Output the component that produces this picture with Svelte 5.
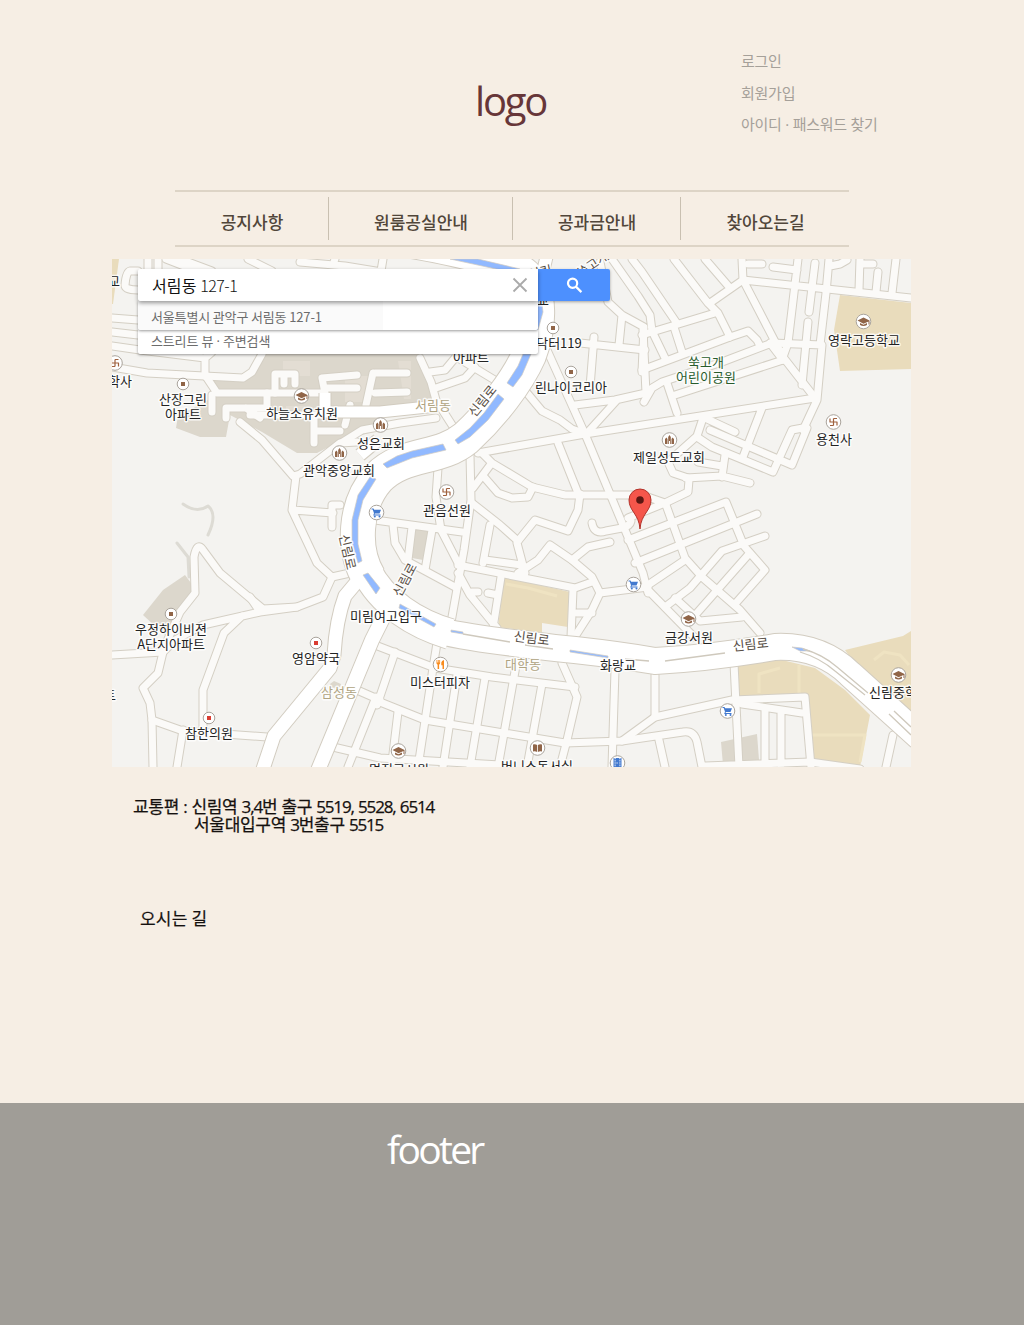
<script>
  const menu = ['공지사항', '원룸공실안내', '공과금안내', '찾아오는길'];
  const account = ['로그인', '회원가입', '아이디 · 패스워드 찾기'];

  // Minor streets
  const streets = [
    'M148 259V271M158 259V271M138 271H130Q126 272 125 285Q125 290 138 290',
    'M166 259L197 271M180 259L212 271M248 259L272 271M335 259L331 271M300 262L345 266L400 275M383 259L381 271',
    'M112 318L138 320M112 332L138 335M112 346L140 350L205 358L212 352M205 358V376',
    'M112 367L147 373L243 378L252 372L262 354',
    'M207 378L217 393H325M325 393L322 378L357 375M325 388H357',
    'M275 393V374H295V384M284 375V384M267 393V408H226V418M212 395V412M246 408L260 418',
    'M375 373H407M375 393L407 392M373 373L366 405M240 422L262 440L293 476L300 474L340 443L357 442',
    'M314 443V431H340M314 431V415M250 415H325M350 405L345 425M338 445L362 430L400 423L436 418',
    'M420 358L431 382L436 400L452 425M430 372L445 370L455 358M436 388L465 378L475 367M458 358L498 382',
    'M612 259L638 296L650 315L652 331L665 358M600 262L608 302L622 315L644 327L642 372M622 315L619 345',
    'M580 343L645 350M594 337L590 387M547 350L585 434L643 573L648 593',
    'M527 393L542 411L560 420L572 429L586 434M588 432L617 400M575 405L615 400L646 393L643 330',
    'M632 259L642 272L676 322M642 335L715 313M674 259L708 303L718 313L730 337M705 259L730 288M710 303L743 280L742 259',
    'M743 280L783 357L815 398M743 280L911 298M748 264H762M773 267L797 270M798 259L788 343L783 357M815 263L809 312M808 322L802 385',
    'M829 259L826 293L820 345M830 266L840 264L847 260M860 259L859 290M860 264H873M878 272L876 292M896 259L892 293',
    'M772 343L822 345L817 400L803 430M642 370L730 337L748 331L757 340L760 346M644 402L652 388L662 382L722 362L772 343M770 343L783 360',
    'M674 327L682 352M675 395L783 360M667 383L677 413M478 453L585 434L815 398M762 408L743 457M703 418L697 436L668 462L673 473L688 478',
    'M705 418L735 432M697 437L712 447L773 472L792 430L803 428M710 430L792 465L807 428M686 478L722 476L750 483M725 455L722 477M698 462L722 466',
    'M689 480L688 492L665 503L628 518M665 503L642 495L565 495L532 487L492 463L482 453',
    'M666 505L685 558L702 577L740 610L760 633M628 540L726 502L744 546L765 570L735 604M635 563L757 514M765 536L722 551L690 588L665 607',
    'M645 587L685 560M645 587L694 637M748 555L697 613M675 598L700 621L742 617M592 523Q594 535 606 531L622 528Q630 526 631 521',
    'M491 464L473 488M485 478L498 493L512 498L528 497L533 487M470 455L471 500L464 550L450 628M438 468L436 497L441 530L458 563',
    'M375 520L462 532M393 525L395 543L405 560L455 587M412 527L408 560M432 530L425 570M472 503L500 525L518 541M490 525L483 563',
    'M518 541L535 520L568 531L578 510L580 494M517 543L525 573M485 560L522 565M458 565L575 588L592 582M518 573L538 560L550 545L572 560L592 577L600 593L592 610L574 638',
    'M572 560L588 547L610 542M600 593L648 587M458 573L470 595L497 628M472 592H478M488 593L498 595M501 577L493 628M573 590L571 637M577 613H592',
    'M558 443L578 493M296 476L292 510L317 563L332 577L350 573M293 510L333 513M340 505H332V527',
    'M332 577L323 597L297 607L263 609L220 573L203 550Q197 541 194 557L195 593L180 612L164 648L158 673L143 688L150 703L152 720L153 767',
    'M112 655L163 652L175 640L203 625L260 612L297 607M250 597L260 612M242 616L224 633L203 690V735M152 720L183 731L267 737M183 730L177 767',
    'M357 690L380 700M376 697L348 767M333 747L380 758L500 765M375 645L435 668L492 677L575 687M375 700L425 720L565 743L622 741L655 717L732 700L805 697L811 767',
    'M395 652L377 705M437 643L433 668L418 767M457 675L443 767M485 678L470 767M517 660L498 767M542 684L527 767M562 663L577 697L567 740L560 767M615 670L612 767M398 712L392 762',
    'M655 675V717M734 663L739 767M642 738L683 732Q694 730 697 742L702 767M622 741L642 738M659 740L665 767M742 704L802 713M765 710V765M781 712V765M705 766L810 762L860 769M893 735L886 767'
  ];
  const avenues = [
    { d: 'M360 232C470 250 508 260 525 276C541 292 540 326 529 355C517 382 492 414 466 438C438 461 405 451 378 478C354 505 352 550 369 578', w: 34 },
    { d: 'M366 570C382 603 416 624 450 634', w: 30 },
    { d: 'M430 628C456 637 520 644 575 650Q620 655 655 661Q710 658 775 647Q820 645 850 674L920 737', w: 26 },
    { d: 'M366 571L345 596Q336 620 334 655L330 668L274 736L262 772', w: 13 },
    { d: 'M388 608L372 640L314 780', w: 14 },
    { d: 'M325 393V412H380L437 406', w: 11 },
    { d: 'M378 440L360 455', w: 12 },
    { d: 'M547 255L541 280', w: 12 }
  ];
  const water = [
    'M450 259H478L520 269L540 288L543 312L538 330L533 330L537 310L533 292L510 272Z',
    'M523 354H531L522 375L513 387L507 383L518 366Z',
    'M498 394L504 399L488 420L470 437L458 444L455 440L470 428L484 413Z',
    'M383 464L397 456L412 451L443 444L446 450L412 458L387 468Z',
    'M370 477L376 479L363 500L358 520L358 544L362 561L358 563L352 543L352 520L358 495Z',
    'M363 575L368 573L380 588L376 594Z',
    'M400 604L436 624L434 627L399 608Z',
    'M451 630L463 632V634L451 632ZM570 650L608 656V658L570 652ZM792 647L802 648L810 651L800 651Z'
  ];
  const land = {
    campus: 'M252 372L262 354H418L428 378L434 403L433 408L375 414L380 430L340 441L317 453H297L262 432L230 415L226 437H200L176 428L178 416L205 402L217 393L208 378L243 378Z',
    grey: ['M163 590L185 575L191 583L192 597L168 638L143 615Z', 'M415 528L428 531L423 560L412 558Z', 'M721 742L757 734L759 760L723 765Z', 'M330 684L334 681L341 684L340 687L331 688Z'],
    tan: ['M112 259H119L113 304H112Z', 'M840 295L911 303V369L840 371L834 330Z', 'M504 577L570 592L568 627L542 623V633L498 627Z', 'M738 665L782 660L815 668L845 690L870 715L860 767H812L805 697L738 700Z', 'M845 650L903 636L911 631V722L880 700Z']
  };

  const pins = [
    ['dot', 183, 384], ['dot', 553, 328], ['dot', 571, 372], ['dot', 171, 614], ['clinic', 316, 643], ['clinic', 209, 718],
    ['school', 301.5, 396], ['school', 863.5, 321.5], ['school', 688.5, 619], ['school', 898.5, 675], ['school', 398.5, 751],
    ['church', 380.5, 425], ['church', 339.5, 453], ['church', 669.5, 440], ['temple', 115, 363], ['temple', 446.5, 492], ['temple', 833.5, 422],
    ['cart', 376.5, 512.5], ['cart', 633.5, 584.5], ['cart', 727.5, 711], ['food', 440.5, 664.5], ['book', 537.5, 748], ['film', 617.5, 763]
  ];
  // text, centre x, baseline y, style, rotation
  const labels = [
    ['교', 114, 286], ['학사', 120, 386], ['산장그린', 183, 404], ['아파트', 183, 419], ['하늘소유치원', 302, 418],
    ['아파트', 471, 362], ['교', 543, 305], ['닥터119', 559, 348], ['린나이코리아', 571, 392], ['영락고등학교', 864, 345],
    ['쑥고개', 706, 367, 'park'], ['어린이공원', 706, 382, 'park'], ['용천사', 834, 444], ['성은교회', 381, 448],
    ['관악중앙교회', 339, 475], ['제일성도교회', 669, 462], ['관음선원', 447, 515], ['우정하이비젼', 171, 634],
    ['A단지아파트', 171, 649], ['영암약국', 316, 663], ['미림여고입구', 386, 621], ['참한의원', 209, 738],
    ['미스터피자', 440, 687], ['화랑교', 618, 670], ['금강서원', 689, 642], ['신림중학교', 899, 697],
    ['면진고시원', 399, 774], ['버니스독서실', 537, 771], ['트', 110, 700],
    ['서림동', 433, 410, 'area'], ['삼성동', 339, 697, 'area'], ['대학동', 523, 669, 'area'],
    ['신림로', 486, 404, 'road', -51], ['신림로', 343, 553, 'road', 77], ['신림로', 409, 582, 'road', -62],
    ['신림로', 531, 643, 'road', 7], ['신림로', 751, 649, 'road', -6], ['쑥고개로', 600, 265, 'road', -35], ['신림', 541, 277, 'road', -12]
  ];
</script>

{#snippet pin(kind, x, y)}
  <g transform="translate({x} {y})">
    {#if kind === 'dot' || kind === 'clinic'}
      <circle r="5.8" class="disc" />
      <rect x="-2" y="-2" width="4" height="4" class:red={kind === 'clinic'} class="brown" />
    {:else}
      <circle r="7.3" class="disc" />
      {#if kind === 'school'}
        <path class="brown" d="M-6-1L0-4L6-1V3H5V0L0 2.3ZM-3.5 1.5L0 3.2L3.5 1.5V3.5Q0 5.5-3.5 3.5Z" />
      {:else if kind === 'church'}
        <path class="brown" d="M-4.5 4V-1L-3-2.5L-2-1V4ZM-1.3 4V-3L0-5L1.3-3V4H.5V1H-.5V4ZM2 4V-1L3-2.5L4.5-1V4Z" />
      {:else if kind === 'temple'}
        <path class="mark" d="M-3.5-3.5V0H3.5V3.5M0-3.5V3.5M0-3.5H3.5M-3.5 3.5H0" />
      {:else if kind === 'cart'}
        <path class="blue" d="M-5-4H-3L-2.3-2.7H4.5L3 1H-1.6L-2 2H4V3H-3.3L-2.5 .7L-3.8-3H-5Z" />
        <circle class="blue" cx="-1.7" cy="4" r="1" /><circle class="blue" cx="3" cy="4" r="1" />
      {:else if kind === 'food'}
        <path class="orange" d="M-4-4.5H-3.2V-2H-2.6V-4.5H-1.8V-2H-1.2V-4.5H-.4V-1L-1.4 .3V4.5H-2.9V.3L-4-1ZM3.5-4.5V4.5H2V.7H.8V-2Q1-4 3.5-4.5Z" />
      {:else if kind === 'book'}
        <path class="brown" d="M-4.5-3.5Q-2-4-.4-3V4Q-2 3-4.5 3.5ZM.4-3Q2-4 4.5-3.5V3.5Q2 3 .4 4Z" />
      {:else}
        <path class="blue" d="M-4-5H4V5H-4Z" /><path class="reel" d="M-2.4-5V5M2.4-5V5M-1 0H1" />
      {/if}
    {/if}
  </g>
{/snippet}

<div class="page">
  <header>
    <div class="logo">logo</div>
    <ul class="account">
      {#each account as item}<li>{item}</li>{/each}
    </ul>
  </header>

  <nav>
    {#each menu as item}<span>{item}</span>{/each}
  </nav>

  <section class="map">
    <svg viewBox="112 259 799 508" width="799" height="508">
      <path class="grey" d={land.campus} />
      {#each land.grey as d}<path class="grey" {d} />{/each}
      {#each land.tan as d}<path class="tan" {d} />{/each}
      <path class="block" d="M283 361H310V376H283ZM345 376H368V402H345ZM286 406H305V414H286ZM398 361H411V399H404Z" />
      <path class="trail" d="M183 504Q197 514 208 506Q218 514 208 535M177 543L188 557L189 577" />
      <path class="tan-line" d="M506 584L528 588L557 596M759 693V674L780 668M799 665V696M811 735H865L860 762M874 660L884 652L900 655L909 665" />
      {#each streets as d}<path class="casing" {d} />{/each}
      {#each streets as d}<path class="street" {d} />{/each}
      {#each avenues as a}<path class="avenue-casing" d={a.d} stroke-width={a.w + 2} />{/each}
      {#each avenues as a}<path class="avenue" d={a.d} stroke-width={a.w} />{/each}
      {#each water as d}<path class="water" {d} />{/each}
      <path class="median" d="M463 634L510 642M525 645L553 649M625 659L649 661M665 661L725 653M803 649Q822 654 837 667L868 693M800 652Q820 658 835 671L865 695M894 711L911 727M889 714L911 735" />
      {#each pins as p}{@render pin(p[0], p[1], p[2])}{/each}
      {#each labels as [text, x, y, kind, turn]}
        <text {x} {y} class={kind ?? 'place'} transform="rotate({turn ?? 0} {x} {y})">{text}</text>
      {/each}
      <path class="marker" d="M640 529C639 514 629 511 629 500A11 11 0 0 1 651 500C651 511 641 514 640 529Z" />
      <circle cx="640" cy="500" r="3.8" fill="#5b1712" />
    </svg>

    <div class="search">
      <div class="field">
        <span>서림동 <b>127-1</b></span>
        <svg width="16" height="16" viewBox="0 0 16 16"><path d="M1.5 1.5L14.5 14.5M14.5 1.5L1.5 14.5" /></svg>
      </div>
      <div class="button">
        <svg width="18" height="18" viewBox="0 0 18 18"><circle cx="7.6" cy="7.2" r="4.6" /><path d="M10.9 10.6L16.4 16.1" /></svg>
      </div>
      <div class="suggest first"><span>서울특별시 관악구 서림동 127-1</span></div>
      <div class="suggest second"><span>스트리트 뷰 · 주변검색</span></div>
    </div>
  </section>

  <section class="info">
    <p class="route">교통편 : 신림역 <b>3,4</b>번 출구 <b>5519, 5528, 6514</b></p>
    <p class="route stop">서울대입구역 <b>3</b>번출구 <b>5515</b></p>
    <h2>오시는 길</h2>
  </section>

  <footer>footer</footer>
</div>

<style>
  :global(body) { background: #f6eee4; }
  .page {
    width: 1024px;
    height: 1325px;
    display: flex;
    flex-direction: column;
    overflow: hidden;
    font-family: 'Open Sans', 'Noto Sans CJK KR', sans-serif;
  }
  b { font-weight: inherit; }
  header {
    height: 190px;
    flex: none;
    display: grid;
    grid-template-columns: 475px 266px 1fr;
  }
  .logo {
    grid-column: 2;
    padding-top: 74px;
    font-size: 40px;
    line-height: 54px;
    letter-spacing: -2.2px;
    color: #673638;
  }
  .account {
    margin: 0;
    padding: 46px 0 0;
    list-style: none;
    font: 15px/31.5px 'Open Sans', 'Noto Sans CJK KR', sans-serif;
    letter-spacing: -0.25px;
    color: #a5a099;
  }
  nav {
    width: 674px;
    height: 53px;
    flex: none;
    margin-left: 175px;
    display: grid;
    grid-template-columns: 154px 184px 168px 168px;
    align-items: center;
    border-top: 2px solid #ddd4c6;
    border-bottom: 2px solid #ddd4c6;
    color: #51463a;
    font: 500 17px/43px 'Noto Sans CJK KR', sans-serif;
  }
  nav span {
    height: 43px;
    padding: 3px 0 0 1px;
    box-sizing: border-box;
    text-align: center;
    border-right: 1px solid #c9c0b1;
  }
  nav span:last-child { border: 0; }
  .map {
    position: relative;
    width: 799px;
    height: 508px;
    flex: none;
    margin: 12px 0 0 112px;
    background: #f4f3f0;
    overflow: hidden;
  }
  .map > svg { display: block; }
  .map > svg path { stroke-linejoin: round; }
  .grey { fill: #dcd7cc; }
  .tan { fill: #e9dcbc; }
  .block { fill: #e3ddd3; }
  .trail { fill: none; stroke: #dddbd4; stroke-width: 3; stroke-linecap: round; }
  .tan-line { fill: none; stroke: #efe3c2; stroke-width: 3; }
  .casing { fill: none; stroke: #d4cfc4; stroke-width: 9; stroke-linecap: round; }
  .street { fill: none; stroke: #fbfaf8; stroke-width: 7; stroke-linecap: round; }
  .avenue-casing { fill: none; stroke: #d2ccc0; }
  .avenue { fill: none; stroke: #fff; }
  .water { fill: #91b9ff; stroke: #d2ccc0; stroke-width: 0.7; }
  .median { fill: none; stroke: #cfc9bd; stroke-width: 1.3; }
  .disc { fill: #fff; stroke: #aaa49c; stroke-width: 1; }
  .brown { fill: #906548; }
  .red { fill: #d93d32; }
  .blue { fill: #4279cf; }
  .orange { fill: #f98b1c; }
  .mark { fill: none; stroke: #a0623f; stroke-width: 1.2; }
  .reel { fill: none; stroke: #fff; stroke-width: 1; stroke-dasharray: 1.2 1; }
  .marker { fill: #f5564b; stroke: #b2332b; stroke-width: 1; }
  text {
    font: 13px 'Noto Sans CJK KR', sans-serif;
    text-anchor: middle;
    paint-order: stroke;
    stroke: #fffc;
    stroke-width: 3px;
    stroke-linejoin: round;
    fill: #222;
  }
  .park { fill: #285c2c; }
  .area { fill: #b0a482; }
  .road { fill: #574e45; }
  .search {
    position: absolute;
    left: 26px;
    top: 10px;
    display: grid;
    grid-template-columns: 400px 72px;
    grid-template-rows: 32px 29px 24px;
    font-family: 'Noto Sans CJK KR', sans-serif;
  }
  .field {
    z-index: 3;
    display: flex;
    align-items: center;
    justify-content: space-between;
    padding: 0 10px 0 14px;
    background: #fff;
    border-radius: 2px 0 0 2px;
    box-shadow: 0 2px 4px #0006;
    font-size: 16px;
    letter-spacing: 0.1px;
    color: #111;
  }
  .field b {
    font-weight: 300;
    letter-spacing: -0.5px;
  }
  .field path { stroke: #aaa; stroke-width: 1.8; }
  .button {
    z-index: 2;
    display: grid;
    place-items: center;
    background: #4d90fe;
    border-radius: 0 2px 2px 0;
    box-shadow: 0 1px 3px #0005;
  }
  .button svg { fill: none; stroke: #fff; stroke-width: 2.2; }
  .suggest {
    grid-column: 1;
    display: flex;
    align-items: center;
    padding-left: 13px;
    background: #fff;
    border-radius: 0 0 2px 2px;
    box-shadow: 0 1px 3px #0006;
    font-size: 13px;
    letter-spacing: -0.15px;
    color: #6c6c6c;
  }
  .first {
    z-index: 1;
    padding-top: 1px;
    background: linear-gradient(90deg, #fafafa 245px, #fff 245px);
  }
  .second {
    padding-bottom: 4px;
    font-family: 'Open Sans', 'Noto Sans CJK KR', sans-serif;
  }
  .suggest.second { height: 20px; }
  .info {
    height: 336px;
    flex: none;
    box-sizing: border-box;
    padding: 31px 0 0 133px;
    color: #15110f;
  }
  .route {
    margin: 0;
    font: 17px/18px 'Open Sans', 'Noto Sans CJK KR', sans-serif;
    letter-spacing: -0.3px;
    white-space: nowrap;
    -webkit-text-stroke: 0.25px #15110f;
  }
  .route b {
    letter-spacing: -1.15px;
    word-spacing: 1px;
  }
  .stop { padding-left: 61px; }
  h2 {
    margin: 75px 0 0 7px;
    font: 17px/18px 'Noto Sans CJK KR', sans-serif;
    letter-spacing: 0.2px;
    -webkit-text-stroke: 0.2px #15110f;
  }
  footer {
    flex: 1;
    padding: 19px 0 0 387px;
    background: #a09d97;
    color: #fff;
    font-size: 39px;
    line-height: 54px;
    letter-spacing: -2.7px;
  }
</style>
